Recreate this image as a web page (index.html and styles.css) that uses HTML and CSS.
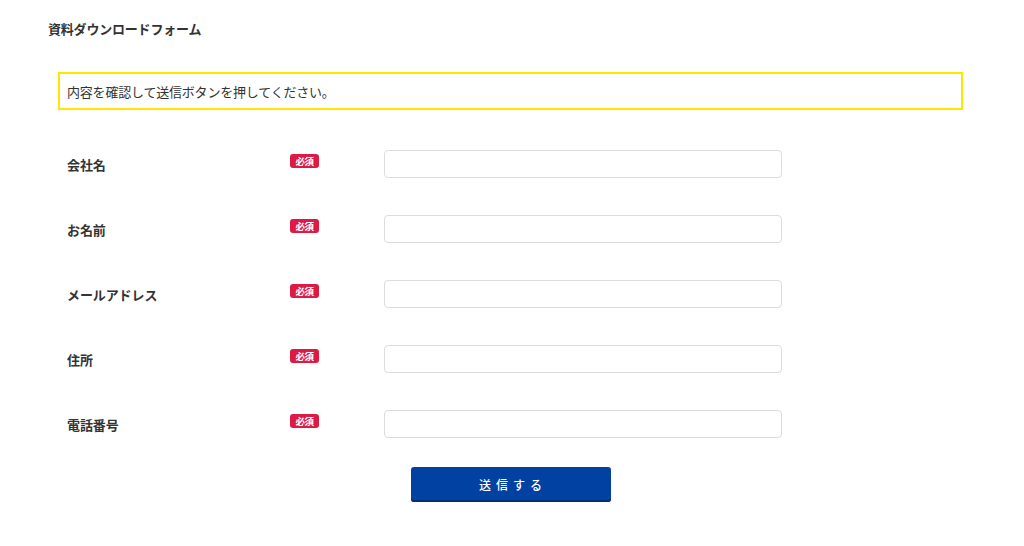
FILE: index.html
```html
<!DOCTYPE html>
<html lang="ja">
<head>
<meta charset="utf-8">
<link rel="stylesheet" href="styles.css">
</head>
<body>
<div class="page">
  <h1 class="title">資料ダウンロードフォーム</h1>
  <div class="form">
    <div class="notice">内容を確認して送信ボタンを押してください。</div>
    <div class="rows">
      <div class="row"><span class="label">会社名</span><span class="badge">必須</span><input class="field" type="text"></div>
      <div class="row"><span class="label">お名前</span><span class="badge">必須</span><input class="field" type="text"></div>
      <div class="row"><span class="label">メールアドレス</span><span class="badge">必須</span><input class="field" type="text"></div>
      <div class="row"><span class="label">住所</span><span class="badge">必須</span><input class="field" type="text"></div>
      <div class="row"><span class="label">電話番号</span><span class="badge">必須</span><input class="field" type="text"></div>
    </div>
    <div class="actions"><button class="submit" type="button">送信する</button></div>
  </div>
</div>
</body>
</html>
```
FILE: styles.css
```css
html, body {
  margin: 0;
  padding: 0;
  background: #fff;
}
body {
  font-family: "Noto Sans CJK JP", "Noto Sans", sans-serif;
  color: #333;
}
.page {
  padding: 19px 0 0 48px;
}
.title {
  margin: 0;
  font-size: 13px;
  font-weight: 700;
  line-height: 20px;
  color: #333;
  letter-spacing: -0.2px;
}
.form {
  margin: 33px 0 0 10px;
  width: 905px;
}
.notice {
  border: 2px solid #ffe600;
  box-sizing: border-box;
  height: 38px;
  padding: 0 0 0 7px;
  display: flex;
  align-items: center;
  font-size: 13px;
  color: #333;
  letter-spacing: -0.2px;
}
.rows {
  margin-top: 40px;
  display: flex;
  flex-direction: column;
  gap: 37px;
}
.row {
  display: flex;
  align-items: center;
  height: 28px;
  padding-left: 9px;
}
.label {
  width: 223px;
  font-size: 13px;
  font-weight: 700;
  color: #333;
  padding-top: 0;
  letter-spacing: -0.1px;
}
.badge {
  width: 29px;
  height: 14px;
  margin-top: -6px;
  background: #dc1a44;
  color: #fff;
  border-radius: 3px;
  font-size: 9.5px;
  font-weight: 700;
  line-height: 14px;
  text-align: center;
  letter-spacing: -0.5px;
}
.field {
  margin-left: 65px;
  width: 398px;
  height: 28px;
  box-sizing: border-box;
  border: 1px solid #dcdcdc;
  border-radius: 4px;
  background: #fff;
  padding: 0 8px;
  outline: none;
}
.actions {
  margin-top: 29px;
  display: flex;
  justify-content: center;
}
.submit {
  width: 200px;
  height: 35px;
  border: none;
  border-radius: 3px;
  background: #0041a1;
  box-shadow: inset 0 -2px 0 #002f78;
  color: #fff;
  font-family: "Noto Sans CJK JP", "Noto Sans", sans-serif;
  font-size: 12px;
  font-weight: 500;
  letter-spacing: 5px;
  padding: 0 0 0 5px;
}
```
